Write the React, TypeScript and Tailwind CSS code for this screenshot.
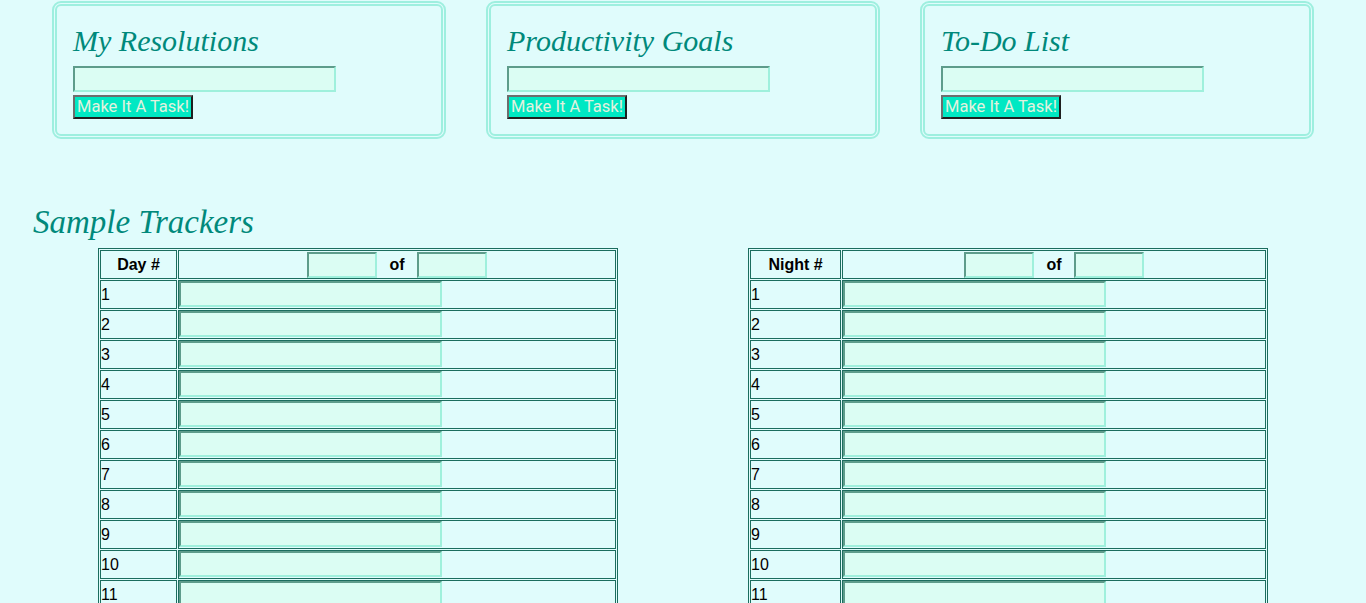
import { useState } from 'react';

const cards = ['My Resolutions', 'Productivity Goals', 'To-Do List'];

const inputClass =
  'block bg-[#dbfdf3] border-2 border-t-[#5e9c8b] border-l-[#5e9c8b] border-b-[#9ff0dc] border-r-[#9ff0dc] outline-none';

function GoalCard({ title }: { title: string }) {
  const [value, setValue] = useState('');

  return (
    <div className="w-[394px] rounded-[9px] border-[5px] border-double border-[#9eefdf] px-4 pt-[17px] pb-[15px]">
      <h2 className="font-['Liberation_Serif',serif] text-[30px] leading-[36px] italic text-[#00897b]">{title}</h2>
      <input className={`${inputClass} mt-[7px] h-[26px] w-[263px]`} value={value} onChange={(e) => setValue(e.target.value)} />
      <button
        type="button"
        className="mt-[3px] block h-[24px] border-2 border-t-[#6d6d6d] border-l-[#6d6d6d] border-b-[#1f1f1f] border-r-[#1f1f1f] bg-[#00e8c3] px-[2px] font-['Roboto',sans-serif] text-[16.5px] leading-[20px] text-[#e2f2df]"
      >
        Make It A Task!
      </button>
    </div>
  );
}

function Tracker({ label, firstCol, secondCol }: { label: string; firstCol: string; secondCol: string }) {
  const rows = Array.from({ length: 11 }, (_, i) => i + 1);

  return (
    <table className="border-separate border-spacing-[1px] border border-[#1b6d5e] font-['Liberation_Sans',sans-serif] text-[16px] text-black">
      <tbody>
        <tr>
          <td className={`${firstCol} border border-[#1b6d5e] p-0`}>
            <div className="flex h-[27px] items-center justify-center font-bold">{label}</div>
          </td>
          <td className={`${secondCol} border border-[#1b6d5e] p-0`}>
            <div className="flex h-[27px] items-center justify-center font-bold">
              <input className={`${inputClass} h-[26px] w-[70px]`} />
              <span className="mx-3">of</span>
              <input className={`${inputClass} h-[26px] w-[70px]`} />
            </div>
          </td>
        </tr>
        {rows.map((n) => (
          <tr key={n}>
            <td className="border border-[#1b6d5e] p-0">
              <div className="flex h-[27px] items-center">{n}</div>
            </td>
            <td className="border border-[#1b6d5e] p-0">
              <div className="h-[27px]">
                <input className={`${inputClass} h-[26px] w-[263px]`} />
              </div>
            </td>
          </tr>
        ))}
      </tbody>
    </table>
  );
}

export default function App() {
  return (
    <div className="min-h-screen bg-[#e0fcfc]">
      <div className="flex gap-10 pl-[52px] pt-[1px]">
        {cards.map((title) => (
          <GoalCard key={title} title={title} />
        ))}
      </div>
      <h1 className="mt-[63px] pl-[33px] font-['Liberation_Serif',serif] text-[33px] leading-[40px] italic text-[#00897b]">
        Sample Trackers
      </h1>
      <div className="mt-[6px] flex gap-[130px] pl-[98px]">
        <Tracker label="Day #" firstCol="w-[77px]" secondCol="w-[438px]" />
        <Tracker label="Night #" firstCol="w-[91px]" secondCol="w-[424px]" />
      </div>
    </div>
  );
}
